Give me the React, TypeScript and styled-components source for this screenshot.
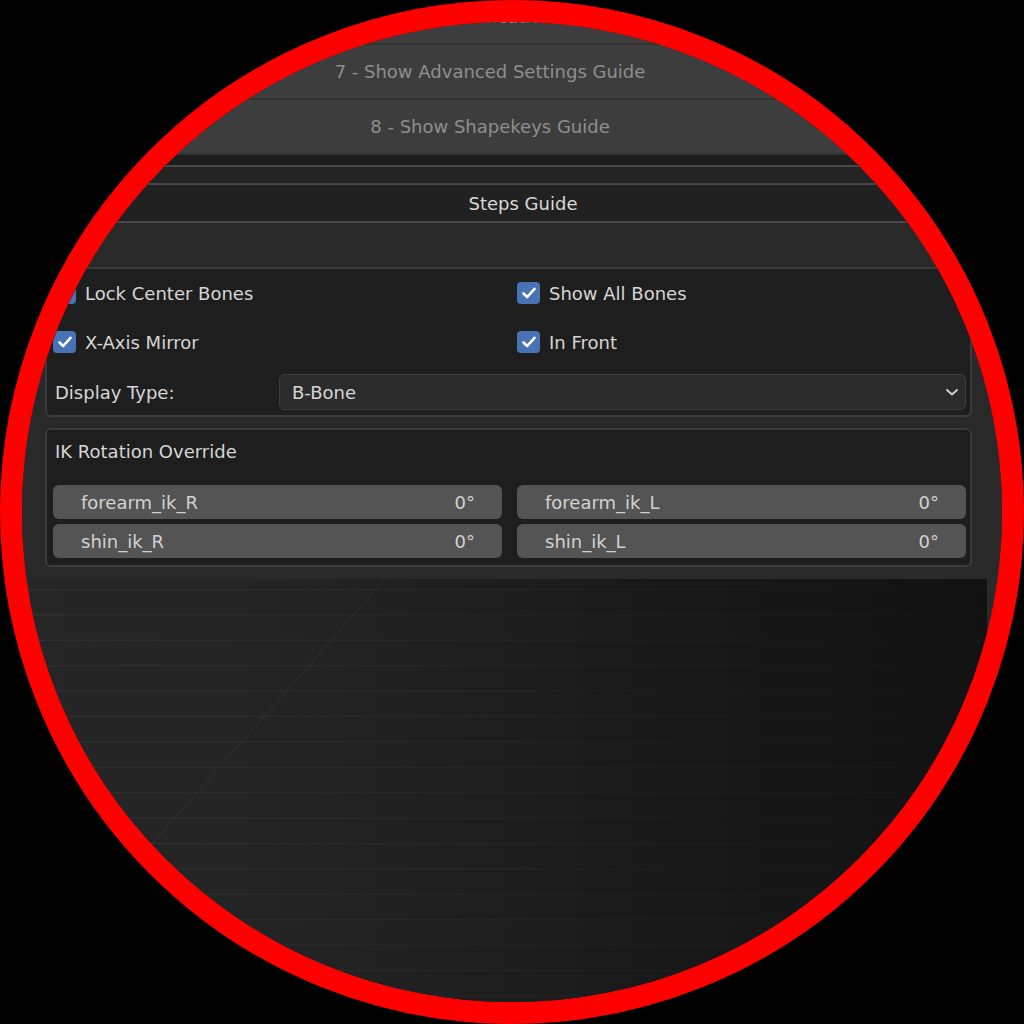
import React from "react";
import styled, { createGlobalStyle } from "styled-components";

const Global = createGlobalStyle`
  html, body { margin: 0; padding: 0; background: #000; }
  body { font-family: "DejaVu Sans", "Liberation Sans", sans-serif; }
`;

const Page = styled.div`
  width: 1024px;
  height: 1024px;
  background: #000;
  overflow: hidden;
`;

const Lens = styled.div`
  width: 1024px;
  height: 1024px;
  box-sizing: border-box;
  border: 22px solid #ff0000;
  border-radius: 50%;
  overflow: hidden;
  background: #292929;
  display: flex;
  flex-direction: column;
  font-family: "DejaVu Sans", "Liberation Sans", sans-serif;
  font-size: 18px;
`;

const GuideStack = styled.div`
  margin-top: -32px;
  display: flex;
  flex-direction: column;
  flex: none;
`;

const GuideButton = styled.div`
  height: 55px;
  box-sizing: border-box;
  display: flex;
  align-items: center;
  justify-content: center;
  padding-right: 44px;
  background: #3d3d3d;
  border-bottom: 2px solid #323232;
  color: #8e8e8e;
  white-space: nowrap;
`;

const Band = styled.div<{ $h: number; $bg: string }>`
  flex: none;
  height: ${(p) => p.$h}px;
  background: ${(p) => p.$bg};
  border-bottom: 2px solid #474747;
`;

const PanelHeader = styled.div`
  flex: none;
  height: 36px;
  display: flex;
  align-items: center;
  justify-content: center;
  padding-left: 22px;
  background: #212121;
  border-bottom: 2px solid #474747;
  color: #d8d8d8;
`;

const PanelBody = styled.div`
  flex: none;
  padding: 44px 30px 12px 23px;
  display: flex;
  flex-direction: column;
  gap: 11px;
  background: #292929;
`;

const Box = styled.div<{ $pt: number; $pb: number }>`
  border: 2px solid #3b3b3b;
  border-radius: 6px;
  background: #1e1e1e;
  padding: ${(p) => p.$pt}px 4px ${(p) => p.$pb}px 6px;
  display: flex;
  flex-direction: column;
`;

const TwoCol = styled.div<{ $gap: number }>`
  display: grid;
  grid-template-columns: 1fr 1fr;
  column-gap: 15px;
  row-gap: ${(p) => p.$gap}px;
`;

const CheckRow = styled.label`
  height: 34px;
  display: flex;
  align-items: center;
  gap: 9px;
  color: #d6d6d6;
`;

const CheckBox = styled.span`
  width: 23px;
  height: 22px;
  border-radius: 4px;
  background: #4772b3;
  display: flex;
  align-items: center;
  justify-content: center;
  flex: none;
`;

const DisplayRow = styled.div`
  margin-top: 15px;
  height: 36px;
  display: grid;
  grid-template-columns: 226px 1fr;
  align-items: center;
`;

const RowLabel = styled.span`
  padding-left: 2px;
  color: #d6d6d6;
`;

const Dropdown = styled.div`
  height: 36px;
  box-sizing: border-box;
  border: 1px solid #3e3e3e;
  border-radius: 6px;
  background: #2b2b2b;
  display: flex;
  align-items: center;
  justify-content: space-between;
  padding: 0 6px 0 12px;
  color: #d6d6d6;
`;

const BoxTitle = styled.div`
  height: 34px;
  display: flex;
  align-items: center;
  padding-left: 2px;
  margin-bottom: 17px;
  color: #d6d6d6;
`;

const Field = styled.div`
  height: 34px;
  box-sizing: border-box;
  border-radius: 6px;
  background: #545454;
  display: flex;
  align-items: center;
  justify-content: space-between;
  padding: 0 27px 0 28px;
  color: #d2d2d2;
`;

const ViewportRow = styled.div`
  flex: 1;
  display: flex;
  background: #2a2a2a;
`;

const Viewport = styled.div`
  margin-left: 8px;
  width: 957px;
  background: linear-gradient(90deg, #262626 0%, #232323 30%, #191919 65%, #121212 100%);
`;

const GridSvg = styled.svg`
  display: block;
  width: 100%;
  height: 100%;
`;

const Check = () => (
  <svg width="18" height="18" viewBox="0 0 18 18">
    <path d="M3.5 9.5 L7.2 13 L14.5 4.8" fill="none" stroke="#fff" strokeWidth="2.6" strokeLinecap="round" strokeLinejoin="round" />
  </svg>
);

const Chevron = () => (
  <svg width="14" height="10" viewBox="0 0 14 10">
    <path d="M2 3 L7 7.5 L12 3" fill="none" stroke="#d0d0d0" strokeWidth="2" strokeLinecap="round" strokeLinejoin="round" />
  </svg>
);

const checks = [
  ["Lock Center Bones", "Show All Bones"],
  ["X-Axis Mirror", "In Front"],
];

const fields = [
  ["forearm_ik_R", "forearm_ik_L"],
  ["shin_ik_R", "shin_ik_L"],
];

const lines = Array.from({ length: 17 }, (_, i) => 10 + i * 25.4);

export default function App() {
  return (
    <Page>
      <Global />
      <Lens>
        <GuideStack>
          <GuideButton>6 - Show Modifications Guide</GuideButton>
          <GuideButton>7 - Show Advanced Settings Guide</GuideButton>
          <GuideButton>8 - Show Shapekeys Guide</GuideButton>
        </GuideStack>
        <Band $h={10} $bg="#1c1c1c" />
        <Band $h={16} $bg="#242424" />
        <PanelHeader>Steps Guide</PanelHeader>
        <PanelBody>
          <Box $pt={7} $pb={5}>
            <TwoCol $gap={15}>
              {checks.flat().map((label) => (
                <CheckRow key={label}>
                  <CheckBox>
                    <Check />
                  </CheckBox>
                  {label}
                </CheckRow>
              ))}
            </TwoCol>
            <DisplayRow>
              <RowLabel>Display Type:</RowLabel>
              <Dropdown>
                <span>B-Bone</span>
                <Chevron />
              </Dropdown>
            </DisplayRow>
          </Box>
          <Box $pt={4} $pb={7}>
            <BoxTitle>IK Rotation Override</BoxTitle>
            <TwoCol $gap={5}>
              {fields.flat().map((name) => (
                <Field key={name}>
                  <span>{name}</span>
                  <span>0°</span>
                </Field>
              ))}
            </TwoCol>
          </Box>
        </PanelBody>
        <ViewportRow>
          <Viewport>
            <GridSvg viewBox="0 0 957 430" preserveAspectRatio="none">
              <defs>
                <linearGradient id="fade" x1="0" x2="1" y1="0" y2="0">
                  <stop offset="0" stopColor="#ffffff" stopOpacity="0.055" />
                  <stop offset="0.6" stopColor="#ffffff" stopOpacity="0.03" />
                  <stop offset="1" stopColor="#ffffff" stopOpacity="0.015" />
                </linearGradient>
              </defs>
              {lines.map((y) => (
                <rect key={y} x="0" y={y} width="957" height="1" fill="url(#fade)" />
              ))}
              <line x1="355" y1="0" x2="100" y2="290" stroke="#ffffff" strokeOpacity="0.045" strokeWidth="1.2" />
            </GridSvg>
          </Viewport>
        </ViewportRow>
      </Lens>
    </Page>
  );
}
